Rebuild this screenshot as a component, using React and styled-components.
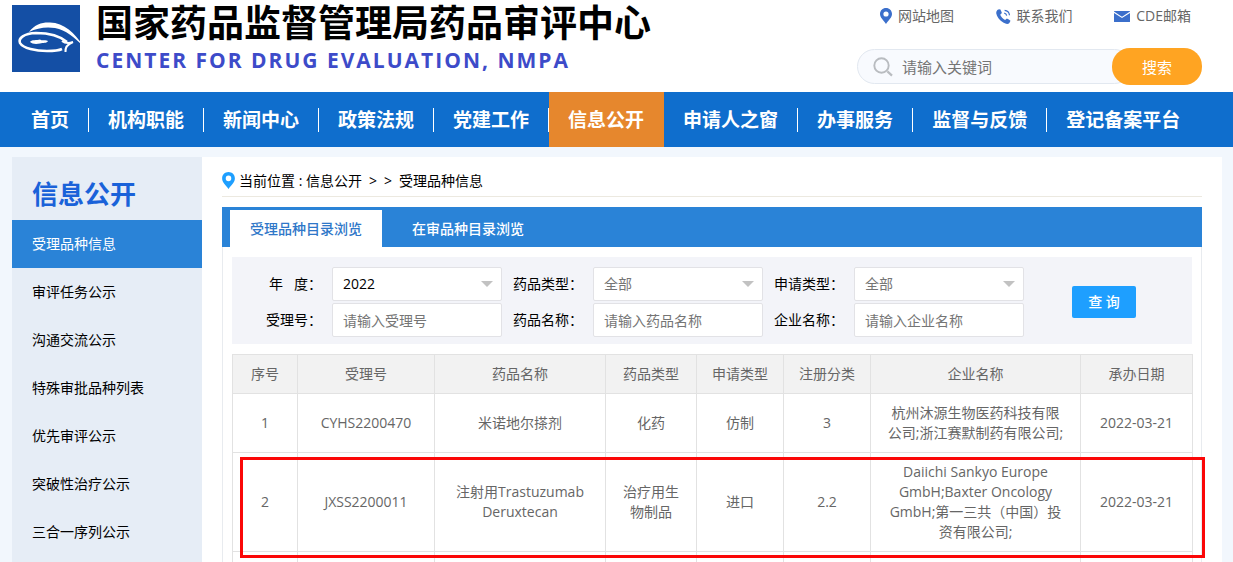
import React, { useState } from 'react';
import styled, { createGlobalStyle } from 'styled-components';

const navItems = [
  '首页',
  '机构职能',
  '新闻中心',
  '政策法规',
  '党建工作',
  '信息公开',
  '申请人之窗',
  '办事服务',
  '监督与反馈',
  '登记备案平台',
];

const sideItems = [
  '受理品种信息',
  '审评任务公示',
  '沟通交流公示',
  '特殊审批品种列表',
  '优先审评公示',
  '突破性治疗公示',
  '三合一序列公示',
];

const tabs = ['受理品种目录浏览', '在审品种目录浏览'];

const columns = [
  { title: '序号', width: 65 },
  { title: '受理号', width: 137 },
  { title: '药品名称', width: 171 },
  { title: '药品类型', width: 91 },
  { title: '申请类型', width: 87 },
  { title: '注册分类', width: 87 },
  { title: '企业名称', width: 210 },
  { title: '承办日期', width: 112 },
];

const rows = [
  [
    '1',
    'CYHS2200470',
    '米诺地尔搽剂',
    '化药',
    '仿制',
    '3',
    '杭州沐源生物医药科技有限公司;浙江赛默制药有限公司;',
    '2022-03-21',
  ],
  [
    '2',
    'JXSS2200011',
    '注射用Trastuzumab Deruxtecan',
    '治疗用生物制品',
    '进口',
    '2.2',
    'Daiichi Sankyo Europe GmbH;Baxter Oncology GmbH;第一三共（中国）投资有限公司;',
    '2022-03-21',
  ],
  ['', '', '', '', '', '', '', ''],
];

const Logo = () => (
  <svg width='72' height='67' viewBox='0 0 72 67' aria-hidden='true'>
    <rect width='68' height='67' fill='#144fa5' />
    <path
      d='M17 27 C23 19 31 17 38 17.5 C52 18 63 28 71 41 C62 32 54 25 43 23 C34 21.5 25 23 17 27 Z'
      fill='#fff'
    />
    <path
      d='M55 37 C48 31 36 28 24 28 C12 28.5 6 33 8 38 C11 43.5 24 46 35 46 C42 46 47 45.5 50 44'
      fill='none'
      stroke='#fff'
      strokeWidth='2.6'
    />
    <path d='M50 36 C53 38.5 57 38.5 61 37 C56 39 53 42 53.5 47' fill='none' stroke='#fff' strokeWidth='2' />
    <path
      d='M18 37 C19 34.5 25 35.5 28 34.5 C31 36.5 33 34 36 36 C35 38.5 31 37.5 28 38.5 C24 39.5 20 39 18 37 Z'
      fill='#fff'
    />
  </svg>
);

const PinIcon = ({ color, width, height }) => (
  <svg width={width} height={height} viewBox='0 0 12 16' aria-hidden='true'>
    <path
      d='M6 0 C2.6 0 0 2.6 0 6 C0 9.6 3.4 12 6 16 C8.6 12 12 9.6 12 6 C12 2.6 9.4 0 6 0 Z M6 3.4 A2.6 2.6 0 1 1 6 8.6 A2.6 2.6 0 1 1 6 3.4 Z'
      fill={color}
      fillRule='evenodd'
    />
  </svg>
);

const PhoneIcon = () => (
  <svg width='15' height='15' viewBox='0 0 15 15' aria-hidden='true'>
    <path
      d='M2.2 0.6 L4.2 0.2 C5 1.4 5.6 2.8 5.9 4.1 L4.2 5.8 C5 8 7 10 9.1 10.9 L10.9 9.6 C12.2 10 13.5 10.8 14.5 11.8 L13.4 14 C12.6 14.9 11 15.2 9.4 14.6 C4.8 12.9 1.4 9.2 0.3 4.6 C0 3 0.8 1.4 2.2 0.6 Z'
      fill='#3b6fcb'
    />
    <path
      d='M8.2 4.2 C9.5 4.4 10.4 5.3 10.7 6.6 M8.6 1.4 C11.2 1.6 13.2 3.6 13.5 6.2'
      fill='none'
      stroke='#3b6fcb'
      strokeWidth='1.2'
    />
  </svg>
);

const MailIcon = () => (
  <svg width='16' height='11' viewBox='0 0 16 11' aria-hidden='true'>
    <rect width='16' height='11' rx='0.6' fill='#3b6fcb' />
    <path d='M0 1.2 L8 6.4 L16 1.2' fill='none' stroke='#fff' strokeWidth='1.2' />
  </svg>
);

const SearchIcon = () => (
  <svg width='20' height='20' viewBox='0 0 20 20' fill='none' stroke='#b9bcc0' aria-hidden='true'>
    <circle cx='8.5' cy='8.5' r='7.2' strokeWidth='1.9' />
    <path d='M14.4 14.4 L19 18.6' strokeWidth='2.2' />
  </svg>
);

const SelectField = ({ id, label, options, dark }) => (
  <>
    <Label htmlFor={id}>{label}</Label>
    <SelectWrap>
      <Select id={id} $dark={dark}>
        {options.map((option) => (
          <option key={option}>{option}</option>
        ))}
      </Select>
      <Caret viewBox='0 0 12 6' aria-hidden='true'>
        <path d='M0 0 H12 L6 6 Z' fill='#c2c2c2' />
      </Caret>
    </SelectWrap>
  </>
);

const TextField = ({ id, label, placeholder }) => (
  <>
    <Label htmlFor={id}>{label}</Label>
    <Input id={id} type='text' placeholder={placeholder} />
  </>
);

const App = () => {
  const [activeTab, setActiveTab] = useState(0);

  const submitHandler = (e) => {
    e.preventDefault();
  };

  return (
    <Page>
      <GlobalStyle />
      <Header>
        <Brand>
          <Logo />
          <div>
            <BrandName>国家药品监督管理局药品审评中心</BrandName>
            <BrandSub>CENTER FOR DRUG EVALUATION, NMPA</BrandSub>
          </div>
        </Brand>
        <HeaderSide>
          <QuickLinks>
            <a href='#map'>
              <PinIcon color='#3b6fcb' width='12' height='16' />
              网站地图
            </a>
            <a href='#contact'>
              <PhoneIcon />
              联系我们
            </a>
            <a href='#mail'>
              <MailIcon />
              CDE邮箱
            </a>
          </QuickLinks>
          <SearchForm onSubmit={submitHandler}>
            <SearchBox>
              <SearchIcon />
              <input type='text' aria-label='请输入关键词' placeholder='请输入关键词' />
            </SearchBox>
            <SearchButton type='submit'>搜索</SearchButton>
          </SearchForm>
        </HeaderSide>
      </Header>

      <Nav>
        {navItems.map((item) => (
          <NavItem key={item} href='#nav' $active={item === '信息公开'}>
            <span>{item}</span>
          </NavItem>
        ))}
      </Nav>

      <Body>
        <Sidebar>
          <SideTitle>信息公开</SideTitle>
          {sideItems.map((item, index) => (
            <SideItem key={item} href='#side' $active={index === 0}>
              {item}
            </SideItem>
          ))}
        </Sidebar>

        <Main>
          <Breadcrumb>
            <PinIcon color='#1e9fff' width='13' height='17' />
            <span>当前位置 : 信息公开</span>
            <span>&gt;</span>
            <span>&gt;</span>
            <span>受理品种信息</span>
          </Breadcrumb>

          <TabBar>
            {tabs.map((tab, index) => (
              <Tab
                key={tab}
                type='button'
                $active={index === activeTab}
                onClick={() => setActiveTab(index)}>
                {tab}
              </Tab>
            ))}
          </TabBar>

          <Panel>
            <Filter onSubmit={submitHandler}>
              <Fields>
                <SelectField id='year' label={'年\u00a0\u00a0\u00a0度：'} options={['2022']} dark />
                <SelectField id='drugType' label='药品类型：' options={['全部']} />
                <SelectField id='applyType' label='申请类型：' options={['全部']} />
                <TextField id='acceptNo' label='受理号：' placeholder='请输入受理号' />
                <TextField id='drugName' label='药品名称：' placeholder='请输入药品名称' />
                <TextField id='company' label='企业名称：' placeholder='请输入企业名称' />
              </Fields>
              <QueryCell>
                <QueryButton type='submit'>查 询</QueryButton>
              </QueryCell>
            </Filter>

            <TableWrap>
              <Table>
                <colgroup>
                  {columns.map((column) => (
                    <col key={column.title} width={column.width} />
                  ))}
                </colgroup>
                <thead>
                  <tr>
                    {columns.map((column) => (
                      <th key={column.title}>{column.title}</th>
                    ))}
                  </tr>
                </thead>
                <tbody>
                  {rows.map((row, rowIndex) => (
                    <tr key={rowIndex}>
                      {row.map((cell, cellIndex) => (
                        <td key={cellIndex}>{cell}</td>
                      ))}
                    </tr>
                  ))}
                </tbody>
              </Table>
              <Highlight />
            </TableWrap>
          </Panel>
        </Main>
      </Body>
    </Page>
  );
};

export default App;

const GlobalStyle = createGlobalStyle`
  * {
    box-sizing: border-box;
  }
  body {
    margin: 0;
    background: #f2f7fd;
    font-family: 'Open Sans', 'Noto Sans CJK SC', sans-serif;
    font-size: 14px;
    line-height: 20px;
    color: #000;
  }
  a {
    color: inherit;
    text-decoration: none;
  }
  input, select, button {
    font: inherit;
    outline: 0;
  }
`;

const Page = styled.div`
  display: flex;
  flex-direction: column;
  height: 100vh;
  overflow: hidden;
`;

const Header = styled.header`
  flex: none;
  display: flex;
  justify-content: space-between;
  height: 92px;
  padding: 0 31px 0 12px;
  background: #fff;
`;

const Brand = styled.div`
  display: flex;
  gap: 12px;
  svg {
    margin-top: 5px;
  }
`;

const BrandName = styled.h1`
  margin: 0;
  font-size: 37px;
  font-weight: 700;
  line-height: 45px;
  white-space: nowrap;
`;

const BrandSub = styled.p`
  margin: 0;
  color: #3d4bc9;
  font-size: 21px;
  font-weight: 700;
  line-height: 30px;
  letter-spacing: 2px;
  white-space: nowrap;
`;

const HeaderSide = styled.div`
  display: flex;
  flex-direction: column;
  gap: 22px;
  width: 345px;
  padding-top: 6px;
`;

const QuickLinks = styled.div`
  display: flex;
  justify-content: space-between;
  padding: 0 11px 0 23px;
  color: #666;
  a {
    display: flex;
    align-items: center;
    gap: 6px;
  }
`;

const SearchForm = styled.form`
  display: flex;
  align-items: center;
  height: 37px;
`;

const SearchBox = styled.div`
  flex: 1;
  display: flex;
  align-items: center;
  gap: 9px;
  height: 35px;
  margin-right: -20px;
  padding: 0 20px 0 15px;
  border: 1px solid #e2e8f0;
  border-radius: 18px;
  background: #f8fafe;
  input {
    flex: 1;
    min-width: 0;
    padding: 0;
    border: 0;
    background: transparent;
    font-size: 15px;
    &::placeholder {
      color: #757575;
    }
  }
`;

const SearchButton = styled.button`
  width: 90px;
  height: 37px;
  padding: 0;
  border: 0;
  border-radius: 18px;
  background: #ffa422;
  color: #fff;
  font-size: 15px;
  z-index: 1;
  cursor: pointer;
`;

const Nav = styled.nav`
  flex: none;
  display: flex;
  height: 55px;
  padding-left: 12px;
  background: #0f6ecd;
`;

const NavItem = styled.a`
  display: flex;
  align-items: center;
  background: ${({ $active }) => ($active ? '#e6872d' : 'transparent')};
  color: #fff;
  font-size: 19px;
  font-weight: 700;
  white-space: nowrap;
  span {
    padding: 0 19px;
    line-height: 24px;
    border-right: 1px solid ${({ $active }) => ($active ? 'transparent' : '#fff')};
  }
  &:last-child span {
    border-right: 0;
  }
`;

const Body = styled.div`
  flex: 1;
  min-height: 0;
  display: flex;
  padding: 10px 11px 0 12px;
`;

const Sidebar = styled.aside`
  flex: none;
  width: 190px;
  background: #e6edf6;
`;

const SideTitle = styled.h2`
  margin: 0;
  padding: 17px 20px 6px;
  color: #1a62d9;
  font-size: 26px;
  font-weight: 700;
  line-height: 40px;
`;

const SideItem = styled.a`
  display: block;
  padding: 0 20px;
  line-height: 48px;
  background: ${({ $active }) => ($active ? '#2a83d7' : 'transparent')};
  color: ${({ $active }) => ($active ? '#fff' : '#000')};
`;

const Main = styled.main`
  flex: 1;
  min-width: 0;
  display: flex;
  flex-direction: column;
  padding: 0 20px;
  background: #fff;
`;

const Breadcrumb = styled.div`
  flex: none;
  display: flex;
  align-items: center;
  gap: 7px;
  height: 40px;
  margin-bottom: 10px;
  padding-top: 8px;
  border-bottom: 1px solid #ece9e0;
  svg {
    margin-right: -3px;
  }
`;

const TabBar = styled.div`
  flex: none;
  display: flex;
  gap: 10px;
  height: 40px;
  padding: 3px 8px 0;
  background: #2a83d7;
`;

const Tab = styled.button`
  padding: 0 20px;
  border: 0;
  background: ${({ $active }) => ($active ? '#fff' : 'transparent')};
  color: ${({ $active }) => ($active ? '#2f77c8' : '#fff')};
  font-weight: 500;
  cursor: pointer;
`;

const Panel = styled.section`
  flex: 1;
  padding: 10px 9px 0;
  border: 1px solid #e8ebef;
  border-width: 0 1px;
`;

const Filter = styled.form`
  display: flex;
  align-items: center;
  padding: 10px 0 7px;
  background: #f3f4f9;
`;

const Fields = styled.div`
  flex: 1;
  display: grid;
  grid-template-columns: 100px 1fr 91px 1fr 91px 1fr;
  gap: 2px 0;
  align-items: center;
`;

const Label = styled.label`
  padding-right: 10px;
  text-align: right;
  white-space: nowrap;
`;

const Input = styled.input`
  width: 100%;
  min-width: 0;
  height: 34px;
  padding: 0 10px;
  border: 1px solid #e2e2e6;
  border-radius: 2px;
  background: #fff;
  &::placeholder {
    color: #757575;
  }
`;

const SelectWrap = styled.div`
  display: grid;
  align-items: center;
  > * {
    grid-area: 1 / 1;
  }
`;

const Select = styled.select`
  width: 100%;
  height: 34px;
  padding: 0 10px;
  border: 1px solid #e2e2e6;
  border-radius: 2px;
  background: #fff;
  color: ${({ $dark }) => ($dark ? '#000' : '#757575')};
  appearance: none;
`;

const Caret = styled.svg`
  justify-self: end;
  width: 12px;
  height: 6px;
  margin-right: 9px;
  pointer-events: none;
`;

const QueryCell = styled.div`
  flex: none;
  width: 168px;
  padding-left: 48px;
`;

const QueryButton = styled.button`
  width: 64px;
  height: 32px;
  padding: 0;
  border: 0;
  border-radius: 2px;
  background: #1e9fff;
  color: #fff;
  font-weight: 500;
  cursor: pointer;
`;

const TableWrap = styled.div`
  position: relative;
  margin-top: 10px;
`;

const Table = styled.table`
  width: 100%;
  table-layout: fixed;
  border-collapse: collapse;
  color: #666;
  text-align: center;
  th,
  td {
    height: 39px;
    padding: 9px 15px;
    border: 1px solid #e2e2e2;
    font-weight: 400;
  }
  th {
    padding: 9px 0;
    background: #f2f2f2;
  }
  td:nth-child(2),
  td:last-child {
    padding: 9px 0;
  }
`;

/* red frame drawn round the second record */
const Highlight = styled.div`
  position: absolute;
  top: 103px;
  left: 8px;
  right: -13px;
  height: 101px;
  border: 3px solid #fb0707;
  pointer-events: none;
`;
